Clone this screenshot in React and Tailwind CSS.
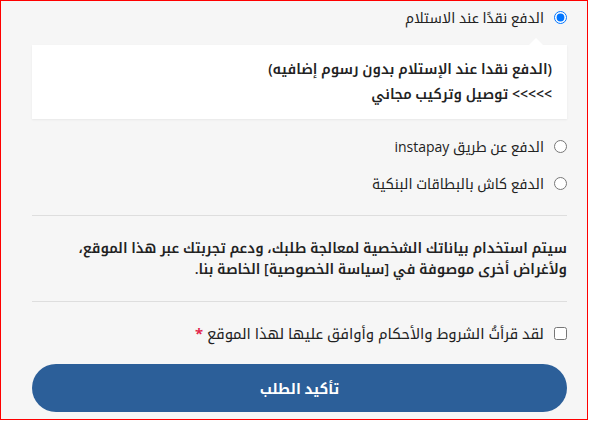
export default function App() {
  return (
    <div className="w-[588px] h-[420px] border border-[#ff0000] bg-[#f6f6f6] overflow-hidden">
      <div
        dir="rtl"
        className="pr-[20px] pl-[31px] pt-[6px] text-[14px] text-[#222] font-['Open_Sans','Noto_Kufi_Arabic',sans-serif]"
      >
        <label className="flex items-center gap-[10px] h-[20px]">
          <input type="radio" name="pay" defaultChecked className="w-[13px] h-[13px] accent-[#0075ff]" />
          <span>الدفع نقدًا عند الاستلام</span>
        </label>

        <div className="relative mt-[18px] bg-white shadow-[0_1px_2px_rgba(0,0,0,0.06)] pr-[15px] pt-[11px] pb-[13px] font-semibold leading-[25px]">
          <span className="absolute -top-[7px] right-[23px] w-0 h-0 border-x-[8px] border-x-transparent border-b-[8px] border-b-white" />
          <p>(الدفع نقدا عند الإستلام بدون رسوم إضافيه)</p>
          <p>&gt;&gt;&gt;&gt;&gt; توصيل وتركيب مجاني</p>
        </div>

        <label className="flex items-center gap-[10px] h-[20px] mt-[17px]">
          <input type="radio" name="pay" className="w-[13px] h-[13px]" />
          <span>الدفع عن طريق instapay</span>
        </label>
        <label className="flex items-center gap-[10px] h-[20px] mt-[17px]">
          <input type="radio" name="pay" className="w-[13px] h-[13px]" />
          <span>الدفع كاش بالبطاقات البنكية</span>
        </label>

        <div className="mt-[22px] border-t border-[#dedede]" />

        <p className="mt-[21px] font-semibold leading-[21px]">
          سيتم استخدام بياناتك الشخصية لمعالجة طلبك، ودعم تجربتك عبر هذا الموقع، ولأغراض أخرى موصوفة في [سياسة الخصوصية] الخاصة بنا.
        </p>

        <div className="mt-[22px] border-t border-[#dedede]" />

        <label className="flex items-center gap-[10px] h-[20px] mt-[21px] text-[14.8px]">
          <input type="checkbox" className="w-[13px] h-[13px]" />
          <span>
            لقد قرأتُ الشروط والأحكام وأوافق عليها لهذا الموقع{" "}
            <span className="text-[#e2264d] font-bold">*</span>
          </span>
        </label>

        <button
          type="button"
          className="mt-[21px] w-full h-[48px] rounded-full bg-[#2c5f99] text-white text-[14px] font-bold"
        >
          تأكيد الطلب
        </button>
      </div>
    </div>
  );
}
